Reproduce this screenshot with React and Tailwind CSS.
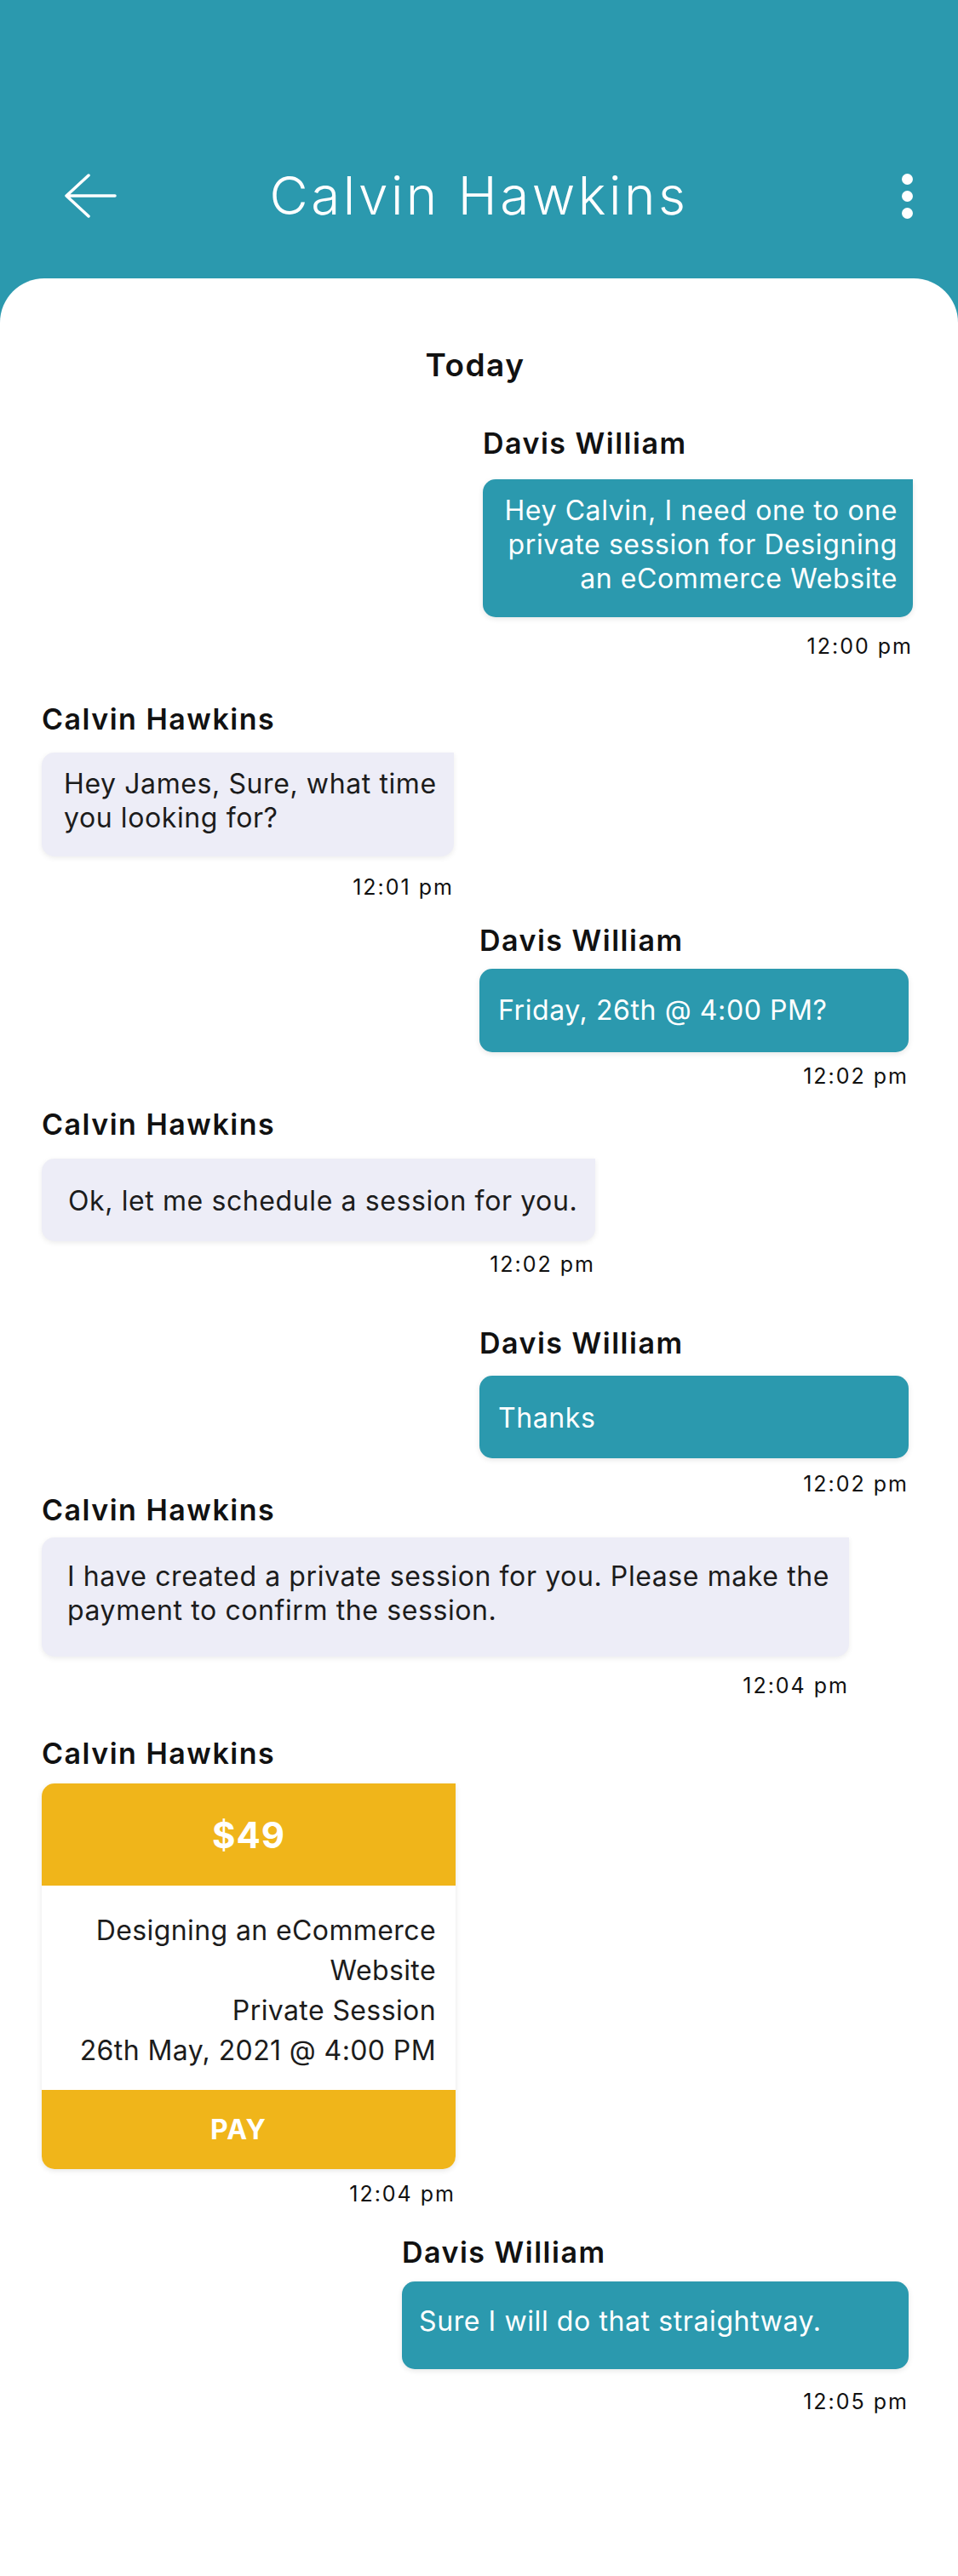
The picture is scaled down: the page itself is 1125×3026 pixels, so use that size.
import React from "react";

function Name({ children }) {
  return (
    <p className="text-[34px] leading-[34px] font-semibold tracking-[1.5px] text-[#111]">
      {children}
    </p>
  );
}

function Time({ children, className = "" }) {
  return (
    <p className={`text-[25px] leading-[24px] tracking-[2px] text-right text-[#111] ${className}`}>
      {children}
    </p>
  );
}

export default function App() {
  return (
    <div className="min-h-[3026px] bg-[#2b99ae] font-[Inter,sans-serif]">
      <header className="h-[327px] pt-[200px] px-[53px] grid grid-cols-[1fr_auto_1fr] items-start">
        <div className="h-[60px] ml-[22px] flex items-center justify-self-start">
          <svg width="62" height="52" viewBox="0 0 62 52" fill="none">
            <path
              d="M29 2 L3 26 L29 50 M3 26 H60"
              stroke="white"
              strokeWidth="3.5"
              strokeLinecap="round"
              strokeLinejoin="round"
            />
          </svg>
        </div>
        <h1 className="h-[60px] leading-[60px] text-[62px] font-light tracking-[3.5px] text-white">
          Calvin Hawkins
        </h1>
        <div className="h-[60px] flex flex-col items-center justify-center gap-[7px] justify-self-end">
          <span className="w-[13px] h-[13px] rounded-full bg-white" />
          <span className="w-[13px] h-[13px] rounded-full bg-white" />
          <span className="w-[13px] h-[13px] rounded-full bg-white" />
        </div>
      </header>

      <main className="bg-white rounded-t-[52px] min-h-[2699px] pt-[80px] pl-[49px] pr-[58px]">
        <p className="text-center text-[37px] leading-[44px] font-semibold tracking-[1.5px] text-[#111]">
          Today
        </p>

        <div className="mt-[53px] flex justify-end -mr-[5px]">
          <div className="w-[505px]">
            <Name>Davis William</Name>
            <div className="mt-[25px] bg-[#2b99ae] rounded-[15px] rounded-tr-none pt-[17px] pb-[25px] pr-[18px] text-right text-white text-[32px] leading-[40px] tracking-[0.6px] shadow-[0_2px_6px_rgba(0,0,0,0.1)]">
              Hey Calvin, I need one to one
              <br />
              private session for Designing
              <br />
              an eCommerce Website
            </div>
            <Time className="mt-[22px]">12:00 pm</Time>
          </div>
        </div>

        <div className="mt-[57px] w-[484px]">
          <Name>Calvin Hawkins</Name>
          <div className="mt-[22px] bg-[#ededf7] rounded-[15px] rounded-tr-none pt-[17px] pb-[25px] pl-[26px] text-[#1c1c1c] text-[32px] leading-[40px] tracking-[0.6px] shadow-[0_2px_6px_rgba(0,0,0,0.08)]">
            Hey James, Sure, what time
            <br />
            you looking for?
          </div>
          <Time className="mt-[24px]">12:01 pm</Time>
        </div>

        <div className="mt-[34px] flex justify-end">
          <div className="w-[504px]">
            <Name>Davis William</Name>
            <div className="mt-[16px] bg-[#2b99ae] rounded-[15px] pt-[29px] pb-[29px] pl-[22px] text-white text-[32px] leading-[40px] tracking-[0.6px] shadow-[0_2px_6px_rgba(0,0,0,0.1)]">
              Friday, 26th @ 4:00 PM?
            </div>
            <Time className="mt-[16px]">12:02 pm</Time>
          </div>
        </div>

        <div className="mt-[28px] w-[650px]">
          <Name>Calvin Hawkins</Name>
          <div className="mt-[23px] bg-[#ededf7] rounded-[15px] rounded-tr-none pt-[30px] pb-[27px] pl-[31px] text-[#1c1c1c] text-[32px] leading-[40px] tracking-[0.6px] shadow-[0_2px_6px_rgba(0,0,0,0.08)]">
            Ok, let me schedule a session for you.
          </div>
          <Time className="mt-[15px]">12:02 pm</Time>
        </div>

        <div className="mt-[64px] flex justify-end">
          <div className="w-[504px]">
            <Name>Davis William</Name>
            <div className="mt-[21px] bg-[#2b99ae] rounded-[15px] pt-[30px] pb-[27px] pl-[22px] text-white text-[32px] leading-[40px] tracking-[0.6px] shadow-[0_2px_6px_rgba(0,0,0,0.1)]">
              Thanks
            </div>
            <Time className="mt-[18px]">12:02 pm</Time>
          </div>
        </div>

        <div className="mt-[2px] w-[948px]">
          <Name>Calvin Hawkins</Name>
          <div className="mt-[15px] bg-[#ededf7] rounded-[15px] rounded-tr-none pt-[26px] pb-[34px] pl-[30px] text-[#1c1c1c] text-[32px] leading-[40px] tracking-[0.6px] shadow-[0_2px_6px_rgba(0,0,0,0.08)]">
            I have created a private session for you. Please make the
            <br />
            payment to confirm the session.
          </div>
          <Time className="mt-[22px]">12:04 pm</Time>
        </div>

        <div className="mt-[51px] w-[486px]">
          <Name>Calvin Hawkins</Name>
          <div className="mt-[18px] rounded-[15px] rounded-tr-none overflow-hidden shadow-[0_2px_6px_rgba(0,0,0,0.1)]">
            <div className="h-[120px] bg-[#f0b51a] flex items-center justify-center text-white text-[42px] font-bold tracking-[1px]">
              $49
            </div>
            <div className="bg-white pt-[29px] pb-[23px] pr-[23px] text-right text-[#1c1c1c] text-[32px] leading-[47px] tracking-[0.4px]">
              Designing an eCommerce
              <br />
              Website
              <br />
              Private Session
              <br />
              26th May, 2021 @ 4:00 PM
            </div>
            <div className="h-[93px] pr-[24px] bg-[#f0b51a] flex items-center justify-center text-white text-[32px] font-bold tracking-[1px]">
              PAY
            </div>
          </div>
          <Time className="mt-[17px]">12:04 pm</Time>
        </div>

        <div className="mt-[40px] flex justify-end">
          <div className="w-[595px]">
            <Name>Davis William</Name>
            <div className="mt-[17px] bg-[#2b99ae] rounded-[15px] pt-[27px] pb-[36px] pl-[20px] text-white text-[32px] leading-[40px] tracking-[0.6px] shadow-[0_2px_6px_rgba(0,0,0,0.1)]">
              Sure I will do that straightway.
            </div>
            <Time className="mt-[26px]">12:05 pm</Time>
          </div>
        </div>
      </main>
    </div>
  );
}
